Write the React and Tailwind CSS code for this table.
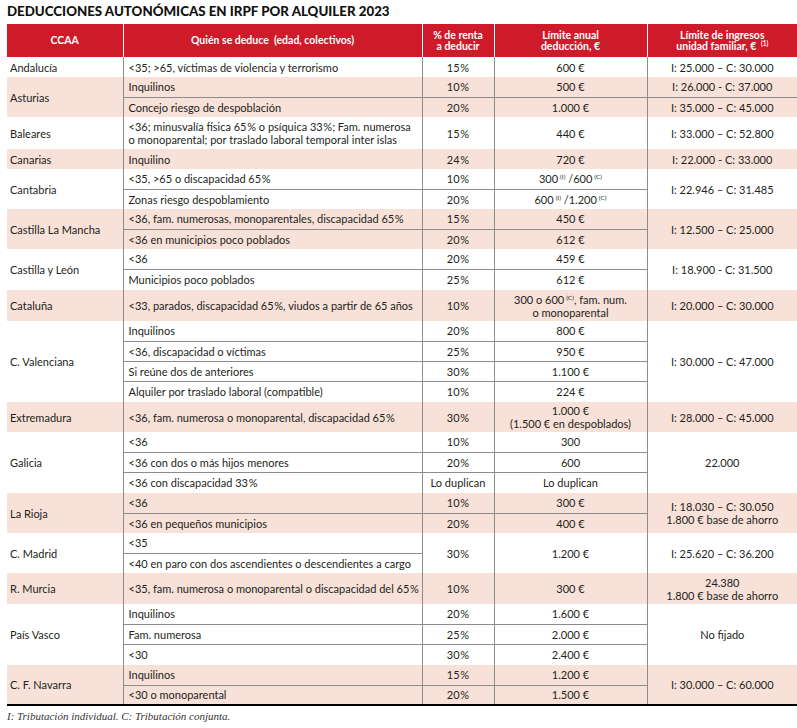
import React from 'react'

const Sup = ({ children }) => (
    <span className="inline-block text-[6.5px] leading-[6px] relative -top-[4px] ml-[2px]">{children}</span>
)

const P = '\u200A%'

const groups = [
    { ccaa: 'Andalucía', rows: [{ q: '<35; >65, víctimas de violencia y terrorismo', p: '15' + P, l: '600 €', i: 'I: 25.000 – C: 30.000', h: 20 }] },
    {
        ccaa: 'Asturias', rows: [
            { q: 'Inquilinos', p: '10' + P, l: '500 €', i: 'I: 26.000 - C: 37.000', h: 20 },
            { q: 'Concejo riesgo de despoblación', p: '20' + P, l: '1.000 €', i: 'I: 35.000 – C: 45.000', h: 20 },
        ]
    },
    {
        ccaa: 'Baleares', rows: [{
            q: <>&lt;36; minusvalía física 65&#8202;% o psíquica 33&#8202;%; Fam. numerosa<br />o monoparental; por traslado laboral temporal inter islas</>,
            p: '15' + P, l: '440 €', i: 'I: 33.000 – C: 52.800', h: 32
        }]
    },
    { ccaa: 'Canarias', rows: [{ q: 'Inquilino', p: '24' + P, l: '720 €', i: 'I: 22.000 - C: 33.000', h: 20 }] },
    {
        ccaa: 'Cantabria', ingresos: 'I: 22.946 – C: 31.485', rows: [
            { q: '<35, >65 o discapacidad 65' + P, p: '10' + P, l: <>300<Sup>(I)</Sup> /600<Sup>(C)</Sup></>, h: 20 },
            { q: 'Zonas riesgo despoblamiento', p: '20' + P, l: <>600<Sup>(I)</Sup> /1.200<Sup>(C)</Sup></>, h: 20 },
        ]
    },
    {
        ccaa: 'Castilla La Mancha', ingresos: 'I: 12.500 – C: 25.000', rows: [
            { q: '<36, fam. numerosas, monoparentales, discapacidad 65' + P, p: '15' + P, l: '450 €', h: 20 },
            { q: '<36 en municipios poco poblados', p: '20' + P, l: '612 €', h: 20 },
        ]
    },
    {
        ccaa: 'Castilla y León', ingresos: 'I: 18.900 - C: 31.500', rows: [
            { q: '<36', p: '20' + P, l: '459 €', h: 20 },
            { q: 'Municipios poco poblados', p: '25' + P, l: '612 €', h: 21 },
        ]
    },
    {
        ccaa: 'Cataluña', rows: [{
            q: '<33, parados, discapacidad 65' + P + ', viudos a partir de 65 años', p: '10' + P,
            l: <>300 o 600<Sup>(C)</Sup>, fam. num.<br />o monoparental</>, i: 'I: 20.000 – C: 30.000', h: 31
        }]
    },
    {
        ccaa: 'C. Valenciana', ingresos: 'I: 30.000 – C: 47.000', rows: [
            { q: 'Inquilinos', p: '20' + P, l: '800 €', h: 20 },
            { q: '<36, discapacidad o víctimas', p: '25' + P, l: '950 €', h: 20 },
            { q: 'Si reúne dos de anteriores', p: '30' + P, l: '1.100 €', h: 20 },
            { q: 'Alquiler por traslado laboral (compatible)', p: '10' + P, l: '224 €', h: 21 },
        ]
    },
    {
        ccaa: 'Extremadura', rows: [{
            q: '<36, fam. numerosa o monoparental, discapacidad 65' + P, p: '30' + P,
            l: <>1.000 €<br />(1.500 € en despoblados)</>, i: 'I: 28.000 – C: 45.000', h: 30
        }]
    },
    {
        ccaa: 'Galicia', ingresos: '22.000', rows: [
            { q: '<36', p: '10' + P, l: '300', h: 20 },
            { q: '<36 con dos o más hijos menores', p: '20' + P, l: '600', h: 20 },
            { q: '<36 con discapacidad 33' + P, p: 'Lo duplican', l: 'Lo duplican', h: 21 },
        ]
    },
    {
        ccaa: 'La Rioja', ingresos: <>I: 18.030 – C: 30.050<br />1.800 € base de ahorro</>, rows: [
            { q: '<36', p: '10' + P, l: '300 €', h: 20 },
            { q: '<36 en pequeños municipios', p: '20' + P, l: '400 €', h: 20 },
        ]
    },
    {
        ccaa: 'C. Madrid', ingresos: 'I: 25.620 – C: 36.200', merged: { p: '30' + P, l: '1.200 €' }, rows: [
            { q: '<35', h: 20 },
            { q: '<40 en paro con dos ascendientes o descendientes a cargo', h: 20 },
        ]
    },
    {
        ccaa: 'R. Murcia', rows: [{
            q: '<35, fam. numerosa o monoparental o discapacidad del 65' + P, p: '10' + P, l: '300 €',
            i: <>24.380<br />1.800 € base de ahorro</>, h: 31
        }]
    },
    {
        ccaa: 'País Vasco', ingresos: 'No fijado', rows: [
            { q: 'Inquilinos', p: '20' + P, l: '1.600 €', h: 20 },
            { q: 'Fam. numerosa', p: '25' + P, l: '2.000 €', h: 20 },
            { q: '<30', p: '30' + P, l: '2.400 €', h: 21 },
        ]
    },
    {
        ccaa: 'C. F. Navarra', ingresos: 'I: 30.000 – C: 60.000', rows: [
            { q: 'Inquilinos', p: '15' + P, l: '1.200 €', h: 20 },
            { q: '<30 o monoparental', p: '20' + P, l: '1.500 €', h: 20 },
        ]
    },
]

const App = () => {
    return (
        <div className="w-[797px] h-[728px] bg-white text-[#231f20] font-['Lato',sans-serif]">
            <h1 className="h-[24px] pl-[7px] pt-[1px] text-[13.3px] leading-[20px] font-black text-[#111]">
                DEDUCCIONES AUTONÓMICAS EN IRPF POR ALQUILER 2023
            </h1>

            <table className="ml-[7px] w-[790px] table-fixed border-collapse border-b-2 border-black text-[11px] leading-[13px]">
                <colgroup>
                    <col className="w-[116px]" />
                    <col className="w-[299px]" />
                    <col className="w-[72px]" />
                    <col className="w-[153px]" />
                    <col className="w-[150px]" />
                </colgroup>
                <thead>
                    <tr className="h-[33px] bg-[#cf1a29] text-white text-[10.5px] leading-[11px]">
                        <th className="font-bold">CCAA</th>
                        <th className="font-bold border-l border-white">Quién se deduce&nbsp; (edad, colectivos)</th>
                        <th className="font-bold border-l border-white">% de renta<br />a deducir</th>
                        <th className="font-bold border-l border-white">Límite anual<br />deducción, €</th>
                        <th className="font-bold border-l border-white">
                            Límite de ingresos<br />unidad familiar, € <Sup>(1)</Sup>
                        </th>
                    </tr>
                </thead>
                <tbody>
                    {groups.map((g, gi) => {
                        const bg = gi % 2 === 1 ? 'bg-[#f7e1d8]' : 'bg-white'
                        return g.rows.map((r, ri) => {
                            const line = ri > 0 ? 'border-t border-[#8c8c8c]' : ''
                            return (
                                <tr key={g.ccaa + ri} className={bg} style={{ height: r.h }}>
                                    {ri === 0 && (
                                        <td rowSpan={g.rows.length} className="pl-[3px] align-middle">{g.ccaa}</td>
                                    )}
                                    <td className={`pl-[5px] border-l border-[#8c8c8c] ${line}`}>{r.q}</td>
                                    {g.merged ? (
                                        ri === 0 && (
                                            <>
                                                <td rowSpan={g.rows.length} className="text-center border-l border-[#8c8c8c]">{g.merged.p}</td>
                                                <td rowSpan={g.rows.length} className="text-center border-l border-[#8c8c8c]">{g.merged.l}</td>
                                            </>
                                        )
                                    ) : (
                                        <>
                                            <td className={`text-center border-l border-[#8c8c8c] ${line}`}>{r.p}</td>
                                            <td className={`text-center border-l border-[#8c8c8c] ${line}`}>{r.l}</td>
                                        </>
                                    )}
                                    {g.ingresos ? (
                                        ri === 0 && (
                                            <td rowSpan={g.rows.length} className="text-center border-l border-[#8c8c8c]">{g.ingresos}</td>
                                        )
                                    ) : (
                                        <td className={`text-center border-l border-[#8c8c8c] ${line}`}>{r.i}</td>
                                    )}
                                </tr>
                            )
                        })
                    })}
                </tbody>
            </table>

            <p className="pl-[7px] pt-[4px] text-[11px] leading-[13px] italic font-['Liberation_Serif',serif] text-[#333]">
                I: Tributación individual. C: Tributación conjunta.
            </p>
        </div>
    )
}

export default App
